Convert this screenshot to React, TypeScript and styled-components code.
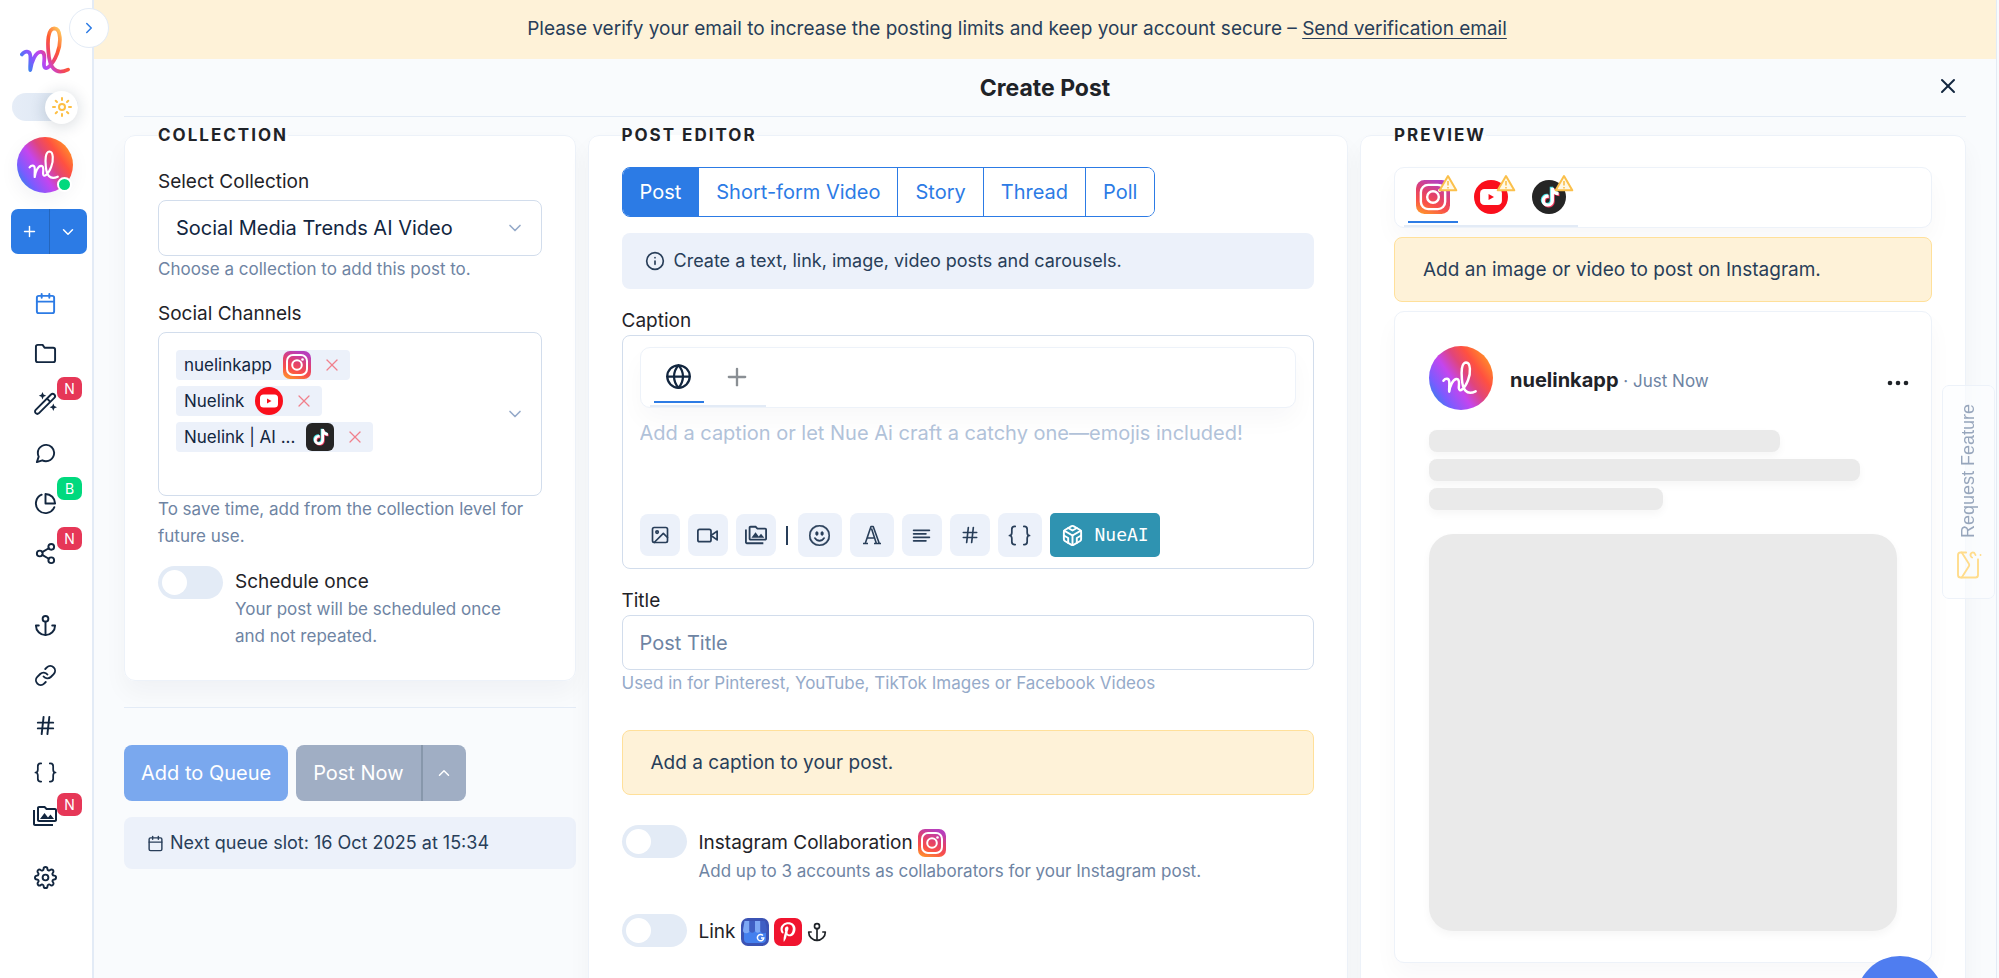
import React, { ReactNode } from "react";
import styled, { createGlobalStyle, css } from "styled-components";
import {
  FiAlignLeft,
  FiAnchor,
  FiCalendar,
  FiChevronDown,
  FiChevronRight,
  FiChevronUp,
  FiCodesandbox,
  FiFolder,
  FiGlobe,
  FiHash,
  FiImage,
  FiInfo,
  FiLink,
  FiMessageCircle,
  FiPieChart,
  FiPlus,
  FiSettings,
  FiShare2,
  FiVideo,
  FiX,
} from "react-icons/fi";
import { BsEmojiSmile } from "react-icons/bs";
import { MdOutlinePermMedia } from "react-icons/md";
import { FaPinterestP, FaTiktok } from "react-icons/fa";

const color = {
  navy: "#12263f",
  ink: "#1f2328",
  slate: "#283e59",
  muted: "#6e84a3",
  faint: "#95aac9",
  border: "#d2ddec",
  hairline: "#e3ebf6",
  soft: "#edf2f9",
  panel: "#ecf1fa",
  blue: "#2c7be5",
  page: "#f9fbfd",
  warn: "#fef2d8",
  warnBorder: "#ffe09a",
  red: "#e63757",
  green: "#00d97e",
};

const GlobalStyle = createGlobalStyle`
  *, *::before, *::after { box-sizing: border-box; }
  body {
    margin: 0;
    background: ${color.page};
    color: ${color.ink};
    font-family: Inter, "Liberation Sans", sans-serif;
    font-size: 19px;
    line-height: 26px;
  }
  button, input, select, textarea { font: inherit; color: inherit; margin: 0; }
  button { cursor: pointer; }
  h1, h2, p { margin: 0; }
  svg { display: block; flex: none; }
`;

/* ---------- shell ---------- */

const Shell = styled.div`
  display: flex;
  height: 100vh;
  padding-right: 2px;
`;

const Sidebar = styled.aside`
  position: relative;
  flex: none;
  width: 94px;
  background: #fff;
  border-right: 2px solid ${color.hairline};
`;

const SideTop = styled.div`
  display: flex;
  flex-direction: column;
  align-items: center;
  width: 90px;
  padding-top: 25px;
`;

const CollapseButton = styled.button`
  position: absolute;
  z-index: 2;
  top: 8px;
  right: -17px;
  display: grid;
  place-items: center;
  width: 40px;
  height: 40px;
  padding: 0;
  border: 1px solid ${color.hairline};
  border-radius: 50%;
  background: #fff;
  color: ${color.blue};
`;

const ThemeSwitch = styled.button`
  display: flex;
  justify-content: flex-end;
  align-items: center;
  width: 66px;
  height: 28px;
  margin-top: 17px;
  padding: 0;
  border: 0;
  border-radius: 14px;
  background: linear-gradient(90deg, #e6edf7, #dbe5f2);
`;

const ThemeKnob = styled.span`
  display: grid;
  place-items: center;
  flex: none;
  width: 33px;
  height: 33px;
  border-radius: 50%;
  background: #fff;
  box-shadow: 0 2px 16px rgba(18, 38, 63, 0.18);
`;

const AccountButton = styled.button`
  position: relative;
  margin-top: 16px;
  padding: 0;
  border: 0;
  border-radius: 50%;
  background: none;
  box-shadow: 0 6px 20px rgba(18, 38, 63, 0.06);
`;

const OnlineDot = styled.span`
  position: absolute;
  right: 1px;
  bottom: 1px;
  width: 15px;
  height: 15px;
  border: 2px solid #fff;
  border-radius: 50%;
  background: ${color.green};
`;

const CreateGroup = styled.div`
  display: flex;
  align-self: flex-end;
  width: 76px;
  height: 45px;
  margin: 16px 3px 0 0;
  border-radius: 7px;
  background: ${color.blue};
  overflow: hidden;

  button {
    display: grid;
    place-items: center;
    flex: 1;
    padding: 0;
    border: 0;
    background: none;
    color: #fff;
  }
  button + button {
    border-left: 1px solid #2466bd;
  }
`;

const NavGroup = styled.nav<{ $gap: number }>`
  display: flex;
  flex-direction: column;
  align-items: center;
  width: 90px;
  margin-top: ${(p) => p.$gap}px;
`;

const NavLink = styled.a<{ $active?: boolean; $compact?: boolean }>`
  position: relative;
  display: grid;
  place-items: center;
  width: 48px;
  height: ${(p) => (p.$compact ? 44 : 50)}px;
  color: ${(p) => (p.$active ? color.blue : color.navy)};
`;

const NavBadge = styled.span<{ $tone: "red" | "green" }>`
  position: absolute;
  top: -1px;
  left: 36px;
  width: 25px;
  height: 23px;
  border-radius: 7px;
  background: ${(p) => color[p.$tone]};
  color: #fff;
  font-size: 14px;
  line-height: 23px;
  text-align: center;
`;

/* ---------- main column ---------- */

const Main = styled.main`
  display: flex;
  flex-direction: column;
  flex: 1;
  min-width: 0;
  border-right: 1px solid ${color.hairline};
`;

const VerifyBanner = styled.div`
  flex: none;
  padding: 16px 72px 17px 16px;
  background: ${color.warn};
  color: ${color.slate};
  text-align: center;

  a {
    color: inherit;
    text-decoration: underline;
    text-underline-offset: 3px;
  }
`;

const TitleBar = styled.header`
  display: grid;
  grid-template-columns: 1fr auto 1fr;
  align-items: center;
  flex: none;
  height: 58px;
  margin: 0 30px;
  border-bottom: 1px solid ${color.hairline};

  h1 {
    grid-column: 2;
    font-size: 23px;
    font-weight: 700;
    line-height: 28px;
  }
`;

const CloseButton = styled.button`
  justify-self: end;
  display: grid;
  place-items: center;
  width: 36px;
  height: 36px;
  padding: 0 0 4px;
  border: 0;
  background: none;
  color: ${color.navy};
`;

const Columns = styled.div`
  display: grid;
  grid-template-columns: repeat(12, minmax(0, 1fr));
  grid-template-rows: minmax(min-content, 1fr);
  column-gap: 12px;
  flex: 1;
  min-height: 0;
  padding: 5px 30px 24px;
  overflow-y: auto;
  scrollbar-width: none;
`;

const Column = styled.div<{ $span: number }>`
  grid-column: span ${(p) => p.$span};
  display: flex;
  flex-direction: column;
`;

const Card = styled.fieldset<{ $fill?: boolean }>`
  min-width: 0;
  margin: 0;
  padding: 19px 33px 30px;
  border: 1px solid ${color.soft};
  border-radius: 11px;
  background: #fff;
  box-shadow: 0 12px 24px rgba(18, 38, 63, 0.04);
  ${(p) => p.$fill && css`flex: 1 0 auto;`}
`;

const Legend = styled.legend`
  padding: 0;
  color: ${color.ink};
  font-size: 17px;
  font-weight: 700;
  letter-spacing: 2px;
  line-height: 26px;
  text-transform: uppercase;
`;

/* ---------- form parts ---------- */

const Field = styled.div<{ $gap?: number }>`
  display: flex;
  flex-direction: column;
  margin-top: ${(p) => p.$gap ?? 0}px;
`;

const Label = styled.label<{ $tight?: boolean }>`
  margin-bottom: ${(p) => (p.$tight ? 1 : 5)}px;
`;

const Help = styled.p<{ $faint?: boolean }>`
  color: ${(p) => (p.$faint ? color.faint : color.muted)};
  font-size: 17px;
  line-height: 27px;
`;

const SelectBox = styled.div`
  display: grid;
  align-items: center;
  height: 56px;
  border: 1px solid ${color.border};
  border-radius: 8px;
  background: #fff;
  color: ${color.faint};

  select {
    grid-area: 1 / 1;
    width: 100%;
    height: 100%;
    padding: 0 48px 0 17px;
    border: 0;
    background: none;
    color: ${color.navy};
    font-size: 20px;
    appearance: none;
  }
  svg {
    grid-area: 1 / 1;
    justify-self: end;
    margin-right: 16px;
    pointer-events: none;
  }
`;

const ChipBox = styled.div`
  display: flex;
  align-items: center;
  height: 164px;
  padding: 17px 16px 17px 17px;
  border: 1px solid ${color.border};
  border-radius: 8px;
`;

const ChipList = styled.ul`
  display: flex;
  flex-direction: column;
  align-items: flex-start;
  align-self: flex-start;
  gap: 6px;
  flex: 1;
  margin: 0;
  padding: 0;
  list-style: none;
`;

const Chip = styled.li`
  display: flex;
  align-items: center;
  gap: 11px;
  height: 30px;
  padding: 0 8px;
  border-radius: 4px;
  background: ${color.panel};
  color: ${color.navy};
  font-size: 17px;
`;

const PlainButton = styled.button<{ $tone: string }>`
  display: grid;
  place-items: center;
  width: 20px;
  height: 20px;
  padding: 0;
  border: 0;
  background: none;
  color: ${(p) => p.$tone};
`;

const SwitchRow = styled.div<{ $gap: number }>`
  display: flex;
  gap: 12px;
  margin-top: ${(p) => p.$gap}px;
`;

const Switch = styled.input`
  flex: none;
  display: flex;
  align-items: center;
  width: 65px;
  height: 33px;
  margin: 0;
  padding: 4px;
  border-radius: 17px;
  background: #e3ebf6;
  appearance: none;
  cursor: pointer;

  &::before {
    content: "";
    width: 25px;
    height: 25px;
    border-radius: 50%;
    background: #fff;
  }
  &:checked {
    justify-content: flex-end;
    background: ${color.blue};
  }
`;

const SwitchText = styled.div`
  padding: 2px 16px 0 0;
`;

const SwitchLabel = styled.label<{ $icons?: boolean }>`
  display: flex;
  align-items: center;
  gap: 5px;
  min-height: ${(p) => (p.$icons ? 31 : 28)}px;
`;

const Divider = styled.hr`
  width: 100%;
  margin: 26px 0 37px;
  border: 0;
  border-top: 1px solid ${color.hairline};
`;

const ButtonRow = styled.div`
  display: flex;
  gap: 8px;
`;

const ActionButton = styled.button<{ $tone: "primary" | "muted" }>`
  height: 56px;
  padding: 0 17px;
  border: 0;
  border-radius: 8px;
  background: ${(p) => (p.$tone === "primary" ? "#7aa8ee" : "#a0aec4")};
  color: #fff;
  font-size: 20px;
`;

const SplitButton = styled.div`
  display: flex;

  ${ActionButton}:first-child {
    border-radius: 8px 0 0 8px;
  }
  ${ActionButton}:last-child {
    display: grid;
    place-items: center;
    width: 45px;
    padding: 0;
    border-left: 2px solid #8797ab;
    border-radius: 0 8px 8px 0;
  }
`;

const Notice = styled.div<{ $tone: "info" | "warn"; $size?: "small" }>`
  display: flex;
  align-items: center;
  gap: ${(p) => (p.$size === "small" ? 6 : 9)}px;
  height: ${(p) => (p.$tone === "warn" ? 65 : p.$size === "small" ? 52 : 56)}px;
  padding: 0 ${(p) => (p.$tone === "warn" ? 28 : 23)}px;
  border-radius: 8px;
  background: ${color.panel};
  color: ${color.slate};
  font-size: 18px;
  ${(p) =>
    p.$tone === "warn" &&
    css`
      border: 1px solid ${color.warnBorder};
      background: ${color.warn};
      font-size: 19px;
    `}
`;

const Spaced = styled.div<{ $top: number }>`
  margin-top: ${(p) => p.$top}px;
`;

/* ---------- editor ---------- */

const TypeTabs = styled.div`
  display: flex;
  align-self: flex-start;
  width: max-content;
  height: 50px;
  border: 1px solid ${color.blue};
  border-radius: 8px;
  overflow: hidden;
`;

const TypeTab = styled.button<{ $active?: boolean }>`
  padding: 0 17px;
  border: 0;
  background: ${(p) => (p.$active ? color.blue : "#fff")};
  color: ${(p) => (p.$active ? "#fff" : color.blue)};
  font-size: 20px;

  & + & {
    border-left: 1px solid ${color.blue};
  }
`;

const CaptionBox = styled.div`
  padding: 11px 17px;
  border: 1px solid ${color.border};
  border-radius: 8px;
`;

const TabCard = styled.div`
  display: flex;
  align-items: flex-end;
  height: 61px;
  padding-left: 9px;
  border: 1px solid ${color.soft};
  border-radius: 10px;
  background: #fff;
  box-shadow: 0 12px 24px rgba(18, 38, 63, 0.03);
`;

const TabStrip = styled.div`
  display: flex;
  gap: 8px;
  height: 59px;
  padding: 2px 4px 2px;
  border-bottom: 2px solid ${color.hairline};
`;

const IconTab = styled.button<{ $active?: boolean; $tone?: string }>`
  display: grid;
  place-items: center;
  width: 50px;
  padding: 2px 0 0;
  border: 0;
  border-bottom: 2px solid ${(p) => (p.$active ? color.blue : "transparent")};
  background: none;
  color: ${(p) => p.$tone ?? color.navy};
`;

const CaptionInput = styled.textarea`
  display: block;
  width: 100%;
  height: 105px;
  padding: 12px 0 0;
  border: 0;
  outline: 0;
  background: none;
  font-size: 20px;
  line-height: 27px;
  resize: none;

  &::placeholder {
    color: #b1c2d9;
    opacity: 1;
  }
`;

const Toolbar = styled.div`
  display: flex;
  align-items: center;
  gap: 8px;
`;

const ToolButton = styled.button<{ $large?: boolean }>`
  display: grid;
  place-items: center;
  width: ${(p) => (p.$large ? 44 : 40)}px;
  height: ${(p) => (p.$large ? 44 : 42)}px;
  padding: 0;
  border: 0;
  border-radius: 8px;
  background: ${color.panel};
  color: ${color.slate};
`;

const ToolDivider = styled.span`
  width: 2px;
  height: 19px;
  margin: 0 2px;
  background: ${color.slate};
`;

const AiButton = styled.button`
  display: flex;
  align-items: center;
  gap: 11px;
  height: 44px;
  padding: 0 11px;
  border: 0;
  border-radius: 5px;
  background: #2f93b1;
  color: #fff;
  font-family: "DejaVu Sans Mono", monospace;
  font-size: 18px;
`;

const TextInput = styled.input`
  height: 55px;
  padding: 0 17px;
  border: 1px solid ${color.border};
  border-radius: 8px;
  background: #fff;
  font-size: 20px;

  &::placeholder {
    color: ${color.muted};
    opacity: 1;
  }
`;

/* ---------- preview ---------- */

const ChannelIcon = styled.span`
  position: relative;
`;

const WarningMark = styled.span`
  position: absolute;
  top: -6px;
  right: -8px;
`;

const PreviewStack = styled.div`
  display: flex;
  flex-direction: column;
  gap: 9px;
`;

const PostCard = styled.article`
  padding: 34px 34px 31px;
  border: 1px solid ${color.soft};
  border-radius: 10px;
  background: #fff;
  box-shadow: 0 12px 24px rgba(18, 38, 63, 0.03);
`;

const PostHeader = styled.header`
  display: flex;
  align-items: center;
  gap: 17px;
  margin: 0 -12px 20px 0;
`;

const PostAuthor = styled.p`
  flex: 1;
  padding-top: 4px;
  color: ${color.muted};
  font-size: 17px;

  strong {
    color: ${color.ink};
    font-size: 20px;
    font-weight: 700;
  }
`;

const PostMenu = styled(PlainButton)`
  width: 22px;
  height: 36px;
  padding-top: 10px;
`;

const SkeletonLine = styled.div<{ $width: string }>`
  width: ${(p) => p.$width};
  height: 22px;
  margin-bottom: 7px;
  border-radius: 8px;
  background: #eaeaea;
  box-shadow: 0 4px 8px rgba(0, 0, 0, 0.04);
`;

const SkeletonMedia = styled.div`
  height: 397px;
  margin-top: 24px;
  border-radius: 24px;
  background: #eaeaea;
  box-shadow: 0 4px 8px rgba(0, 0, 0, 0.04);
`;

const FeatureTab = styled.button`
  position: fixed;
  top: 385px;
  right: 4px;
  display: flex;
  align-items: center;
  justify-content: center;
  gap: 12px;
  width: 53px;
  height: 214px;
  padding: 0;
  border: 1px solid ${color.soft};
  border-radius: 7px;
  background: rgba(252, 253, 255, 0.6);
  color: #97a6bc;
  font-family: "Liberation Sans", sans-serif;
  font-size: 18px;
  writing-mode: vertical-rl;
  transform: rotate(180deg);
`;

const ChatLauncher = styled.button`
  position: fixed;
  right: 55px;
  bottom: -66px;
  width: 88px;
  height: 88px;
  border: 0;
  border-radius: 50%;
  background: #4f7df0;
`;

/* ---------- drawings ---------- */

const SCRIPT_NL =
  "M21 54 C24 50 29 50 29.500 55 C30 60 29 66 29.500 70 C30.500 62 35 51 40.500 51.500 C46 52 43 61 43.500 65 C44 72 52 66 57 53 C61 43 61 27.500 54 27.500 C47 28 47 42 48 52 C49 66 54 76 68 69.500";

const BrandGradient = ({ id }: { id: string }) => (
  <linearGradient id={id} x1="0" y1="0.8" x2="1" y2="0.1">
    <stop offset="0" stopColor="#2c86e8" />
    <stop offset="0.16" stopColor="#7a5cff" />
    <stop offset="0.38" stopColor="#c445ee" />
    <stop offset="0.56" stopColor="#e0457b" />
    <stop offset="0.72" stopColor="#ff5140" />
    <stop offset="0.9" stopColor="#ff8a2a" />
    <stop offset="1" stopColor="#ffb22e" />
  </linearGradient>
);

const Logo = () => (
  <svg width="52" height="51" viewBox="18 24 53 52" fill="none" role="img" aria-label="Nuelink">
    <defs>
      <linearGradient id="logo" gradientUnits="userSpaceOnUse" x1="20" y1="62" x2="62" y2="34">
        <stop offset="0" stopColor="#2c8ce8" />
        <stop offset="0.2" stopColor="#7a5cff" />
        <stop offset="0.4" stopColor="#c045ee" />
        <stop offset="0.58" stopColor="#ee4468" />
        <stop offset="0.75" stopColor="#ff5a30" />
        <stop offset="1" stopColor="#ffc25a" />
      </linearGradient>
    </defs>
    <path d={SCRIPT_NL} stroke="url(#logo)" strokeWidth="3.800" strokeLinecap="round" strokeLinejoin="round" />
  </svg>
);

const Avatar = ({ size, id }: { size: number; id: string }) => (
  <svg width={size} height={size} viewBox="0 0 56 56" fill="none">
    <defs>
      <BrandGradient id={id} />
    </defs>
    <circle cx="28" cy="28" r="28" fill={`url(#${id})`} />
    <path
      d={SCRIPT_NL}
      transform="translate(0 -2) scale(.6)"
      stroke="#fff"
      strokeWidth="3.600"
      strokeLinecap="round"
      strokeLinejoin="round"
    />
  </svg>
);

const Sun = () => (
  <svg width="20" height="20" viewBox="0 0 20 20" fill="none" stroke="#fdbf45" strokeWidth="2" strokeLinecap="round">
    <circle cx="10" cy="10" r="3" />
    <path d="M10 1v2M10 17v2M1 10h2M17 10h2M3.700 3.700l1.300 1.300M15 15l1.300 1.300M3.700 16.300 5 15M15 5l1.300-1.300" />
  </svg>
);

const Wand = () => (
  <svg width="23" height="23" viewBox="0 0 23 23" fill="none" stroke="currentColor" strokeWidth="1.900" strokeLinejoin="round">
    <path d="M1.700 17.800 17 2.500a2.300 2.300 0 0 1 3.300 3.300L5 21.100a2.300 2.300 0 0 1-3.300-3.300zM13 6.500l3.300 3.300" />
    <path d="M8.500 0l1.100 2.600 2.600 1.100-2.600 1.100-1.100 2.600-1.100-2.600-2.600-1.100 2.600-1.100zM19.300 11.500l1.100 2.600 2.600 1.100-2.600 1.100-1.100 2.600-1.100-2.600-2.600-1.100 2.600-1.100z" fill="currentColor" strokeWidth="0" />
  </svg>
);

const WideBraces = ({ width = 23 }: { width?: number }) => (
  <svg width={width} height={width} viewBox="0 0 24 24" fill="none" stroke="currentColor" strokeWidth="1.800" strokeLinecap="round" strokeLinejoin="round">
    <path d="M7.500 2.500H7a3 3 0 0 0-3 3v3.300C4 10.500 3.200 12 1.500 12 3.200 12 4 13.500 4 15.200v3.300a3 3 0 0 0 3 3h.500M16.500 2.500h.500a3 3 0 0 1 3 3v3.300c0 1.700.800 3.200 2.500 3.200-1.700 0-2.500 1.500-2.500 3.200v3.300a3 3 0 0 1-3 3h-.500" />
  </svg>
);

const OutlinedLetter = () => (
  <svg width="20" height="20" viewBox="0 0 20 20" fill="none" stroke="currentColor" strokeWidth="1.600" strokeLinejoin="round">
    <path d="M1 18.500h5M12 18.500h7M3.300 18.200 9 1.500h2.200l6 16.800M9.500 3.500l4.800 14.700M5 13h7.500" />
  </svg>
);

const Instagram = ({ size }: { size: number }) => (
  <svg width={size} height={size} viewBox="0 0 28 28" fill="none">
    <defs>
      <linearGradient id="insta" x1="0.1" y1="1" x2="0.5" y2="0">
        <stop offset="0" stopColor="#ff9a2a" />
        <stop offset="0.35" stopColor="#f9504a" />
        <stop offset="0.65" stopColor="#e0406f" />
        <stop offset="1" stopColor="#b83fbb" />
      </linearGradient>
    </defs>
    <rect width="28" height="28" rx="7" fill="url(#insta)" />
    <rect x="4" y="4" width="20" height="20" rx="6" stroke="#fff" strokeWidth="2" />
    <circle cx="14" cy="14" r="4.800" stroke="#fff" strokeWidth="2" />
    <circle cx="19.500" cy="8.500" r="1.300" fill="#fff" />
  </svg>
);

const Youtube = ({ size }: { size: number }) => (
  <svg width={size} height={size} viewBox="0 0 28 28">
    <circle cx="14" cy="14" r="14" fill="#fa0f1c" />
    <rect x="5" y="7.500" width="18" height="13" rx="3.500" fill="#fff" />
    <path d="M12 11.500v5l4.500-2.500z" fill="#fa0f1c" />
  </svg>
);

const Tiktok = ({ size, round }: { size: number; round?: boolean }) => (
  <svg width={size} height={size} viewBox="0 0 28 28">
    <rect width="28" height="28" rx={round ? 14 : 6} fill="#252525" />
    <FaTiktok x="6.200" y="5.400" size={16} color="#3fe0e6" />
    <FaTiktok x="7.600" y="6.800" size={16} color="#f23a5e" />
    <FaTiktok x="6.900" y="6.100" size={16} color="#fff" />
  </svg>
);

const Pinterest = () => (
  <svg width="28" height="28" viewBox="0 0 28 28">
    <rect width="28" height="28" rx="7" fill="#f0142f" />
    <FaPinterestP x="4" y="4" size={20} color="#fff" />
  </svg>
);

const BusinessProfile = () => (
  <svg width="28" height="28" viewBox="0 0 28 28" fill="none">
    <rect width="28" height="28" rx="7" fill="#3b53b4" />
    <path d="M3 13h22v8a4 4 0 0 1-4 4H7a4 4 0 0 1-4-4z" fill="#4480ee" />
    <path d="M3.500 3h5v9a3 3 0 0 1-6.500 0z" fill="#7da8f5" />
    <path d="M8.500 3H14v9a2.750 2.750 0 0 1-5.500 0z" fill="#3f5fc4" />
    <path d="M14 3h5.500v9a2.750 2.750 0 0 1-5.500 0z" fill="#7da8f5" />
    <path d="M19.500 3h4.500l2 9a3 3 0 0 1-6.500 0z" fill="#3f5fc4" />
    <path d="M22 17.500a3.200 3.200 0 1 0 .800 2.500h-2.800" stroke="#fff" strokeWidth="1.500" />
  </svg>
);

const Warning = () => (
  <svg width="20" height="18" viewBox="0 0 20 18" strokeLinejoin="round">
    <path d="M10 2 18.300 16.300H1.700z" fill="#fff8e6" stroke="#fbc04b" strokeWidth="2" />
    <path d="M10 7v4.500M10 13v1.500" stroke="#fbc04b" strokeWidth="1.600" />
  </svg>
);

const Envelope = () => (
  <svg width="30" height="30" viewBox="0 0 24 24" fill="none" stroke="#ffdc8c" strokeWidth="1.500" strokeLinecap="round" strokeLinejoin="round">
    <g transform="rotate(90 12 12)">
      <path d="M22 10.500V6a2 2 0 0 0-2-2H4a2 2 0 0 0-2 2v12c0 1.100.900 2 2 2h12.500" />
      <path d="m22 7-8.970 5.700a1.940 1.940 0 0 1-2.060 0L2 7" />
      <path d="M18 15.280c.200-.400.500-.800.900-1a2.100 2.100 0 0 1 2.600.400c.300.400.500.800.500 1.300 0 1.300-2 2-2 2M20 22v.010" />
    </g>
  </svg>
);

const Dots = () => (
  <svg width="22" height="6" viewBox="0 0 22 6" fill={color.ink}>
    <circle cx="3" cy="3" r="2.300" />
    <circle cx="11" cy="3" r="2.300" />
    <circle cx="19" cy="3" r="2.300" />
  </svg>
);

/* ---------- content ---------- */

type NavEntry = {
  name: string;
  icon: ReactNode;
  active?: boolean;
  compact?: boolean;
  badge?: "N" | "B";
};

const publishNav: NavEntry[] = [
  { name: "Calendar", icon: <FiCalendar size={23} />, active: true },
  { name: "Collections", icon: <FiFolder size={23} /> },
  { name: "Automations", icon: <Wand />, badge: "N" },
  { name: "Inbox", icon: <FiMessageCircle size={23} /> },
  { name: "Analytics", icon: <FiPieChart size={23} />, badge: "B" },
  { name: "Share", icon: <FiShare2 size={23} />, badge: "N" },
];

const toolsNav: NavEntry[] = [
  { name: "Bio links", icon: <FiAnchor size={23} /> },
  { name: "Short links", icon: <FiLink size={23} /> },
  { name: "Hashtags", icon: <FiHash size={23} /> },
  { name: "Variables", icon: <WideBraces />, compact: true },
  { name: "Media library", icon: <MdOutlinePermMedia size={24} />, compact: true, badge: "N" },
];

const settingsNav: NavEntry[] = [{ name: "Settings", icon: <FiSettings size={23} /> }];

const Nav = ({ entries, gap, label }: { entries: NavEntry[]; gap: number; label: string }) => (
  <NavGroup $gap={gap} aria-label={label}>
    {entries.map((e) => (
      <NavLink key={e.name} href="#" aria-label={e.name} $active={e.active} $compact={e.compact}>
        {e.icon}
        {e.badge && <NavBadge $tone={e.badge === "N" ? "red" : "green"}>{e.badge}</NavBadge>}
      </NavLink>
    ))}
  </NavGroup>
);

const channels = [
  { name: "nuelinkapp", icon: <Instagram size={28} /> },
  { name: "Nuelink", icon: <Youtube size={28} /> },
  { name: "Nuelink | AI ...", icon: <Tiktok size={28} /> },
];

const previewTabs = [
  { name: "Instagram", icon: <Instagram size={34} /> },
  { name: "YouTube", icon: <Youtube size={34} /> },
  { name: "TikTok", icon: <Tiktok size={34} round /> },
];

const CollectionPanel = () => (
  <Column $span={3}>
    <Card>
      <Legend>Collection</Legend>
      <Field $gap={2}>
        <Label htmlFor="collection">Select Collection</Label>
        <SelectBox>
          <select id="collection">
            <option>Social Media Trends AI Video</option>
          </select>
          <FiChevronDown size={20} />
        </SelectBox>
        <Help>Choose a collection to add this post to.</Help>
      </Field>
      <Field $gap={18}>
        <Label as="span" id="channels-label">Social Channels</Label>
        <ChipBox role="group" aria-labelledby="channels-label">
          <ChipList>
            {channels.map((c) => (
              <Chip key={c.name}>
                {c.name}
                {c.icon}
                <PlainButton type="button" $tone="#f0808c" aria-label={`Remove ${c.name}`}>
                  <FiX size={20} strokeWidth={1.5} />
                </PlainButton>
              </Chip>
            ))}
          </ChipList>
          <PlainButton type="button" $tone={color.faint} aria-label="Show channels">
            <FiChevronDown size={20} />
          </PlainButton>
        </ChipBox>
        <Help>To save time, add from the collection level for future use.</Help>
      </Field>
      <SwitchRow $gap={16}>
        <Switch type="checkbox" id="once" />
        <SwitchText>
          <SwitchLabel htmlFor="once">Schedule once</SwitchLabel>
          <Help>Your post will be scheduled once and not repeated.</Help>
        </SwitchText>
      </SwitchRow>
    </Card>
    <Divider />
    <ButtonRow>
      <ActionButton type="button" $tone="primary">Add to Queue</ActionButton>
      <SplitButton>
        <ActionButton type="button" $tone="muted">Post Now</ActionButton>
        <ActionButton type="button" $tone="muted" aria-label="More posting options">
          <FiChevronUp size={18} />
        </ActionButton>
      </SplitButton>
    </ButtonRow>
    <Spaced $top={16}>
      <Notice $tone="info" $size="small">
        <FiCalendar size={17} />
        Next queue slot: 16 Oct 2025 at 15:34
      </Notice>
    </Spaced>
  </Column>
);

const EditorPanel = () => (
  <Column $span={5}>
    <Card $fill>
      <Legend>Post Editor</Legend>
      <TypeTabs>
        {["Post", "Short-form Video", "Story", "Thread", "Poll"].map((t, i) => (
          <TypeTab key={t} type="button" $active={i === 0}>{t}</TypeTab>
        ))}
      </TypeTabs>
      <Spaced $top={16}>
        <Notice $tone="info">
          <FiInfo size={20} />
          Create a text, link, image, video posts and carousels.
        </Notice>
      </Spaced>
      <Field $gap={19}>
        <Label $tight htmlFor="caption">Caption</Label>
        <CaptionBox>
          <TabCard>
            <TabStrip>
              <IconTab type="button" $active aria-label="All channels"><FiGlobe size={27} /></IconTab>
              <IconTab type="button" $tone="#8a8f94" aria-label="Add caption variant"><FiPlus size={28} /></IconTab>
            </TabStrip>
          </TabCard>
          <CaptionInput id="caption" placeholder="Add a caption or let Nue Ai craft a catchy one—emojis included!" />
          <Toolbar>
            <ToolButton type="button" aria-label="Add image"><FiImage size={20} /></ToolButton>
            <ToolButton type="button" aria-label="Add video"><FiVideo size={21} /></ToolButton>
            <ToolButton type="button" aria-label="Media library"><MdOutlinePermMedia size={22} /></ToolButton>
            <ToolDivider />
            <ToolButton type="button" $large aria-label="Emoji"><BsEmojiSmile size={21} strokeWidth={0.4} /></ToolButton>
            <ToolButton type="button" $large aria-label="Font style"><OutlinedLetter /></ToolButton>
            <ToolButton type="button" aria-label="Text spacing"><FiAlignLeft size={21} /></ToolButton>
            <ToolButton type="button" aria-label="Hashtags"><FiHash size={20} /></ToolButton>
            <ToolButton type="button" $large aria-label="Variables"><WideBraces /></ToolButton>
            <AiButton type="button"><FiCodesandbox size={23} />NueAI</AiButton>
          </Toolbar>
        </CaptionBox>
      </Field>
      <Field $gap={19}>
        <Label $tight htmlFor="title">Title</Label>
        <TextInput id="title" type="text" placeholder="Post Title" />
        <Help $faint>Used in for Pinterest, YouTube, TikTok Images or Facebook Videos</Help>
      </Field>
      <Spaced $top={33}>
        <Notice $tone="warn">Add a caption to your post.</Notice>
      </Spaced>
      <SwitchRow $gap={30}>
        <Switch type="checkbox" id="collab" />
        <SwitchText>
          <SwitchLabel htmlFor="collab" $icons>
            Instagram Collaboration <Instagram size={28} />
          </SwitchLabel>
          <Help>Add up to 3 accounts as collaborators for your Instagram post.</Help>
        </SwitchText>
      </SwitchRow>
      <SwitchRow $gap={29}>
        <Switch type="checkbox" id="link" />
        <SwitchText>
          <SwitchLabel htmlFor="link" $icons>
            Link <BusinessProfile /> <Pinterest /> <FiAnchor size={20} />
          </SwitchLabel>
        </SwitchText>
      </SwitchRow>
    </Card>
  </Column>
);

const PreviewPanel = () => (
  <Column $span={4}>
    <Card $fill>
      <Legend>Preview</Legend>
      <PreviewStack>
        <TabCard>
          <TabStrip>
            {previewTabs.map((t, i) => (
              <IconTab key={t.name} type="button" $active={i === 0} aria-label={t.name}>
                <ChannelIcon>
                  {t.icon}
                  <WarningMark><Warning /></WarningMark>
                </ChannelIcon>
              </IconTab>
            ))}
          </TabStrip>
        </TabCard>
        <Notice $tone="warn">Add an image or video to post on Instagram.</Notice>
        <PostCard>
          <PostHeader>
            <Avatar size={64} id="avatar-post" />
            <PostAuthor><strong>nuelinkapp</strong> · Just Now</PostAuthor>
            <PostMenu type="button" $tone={color.ink} aria-label="Post options"><Dots /></PostMenu>
          </PostHeader>
          <SkeletonLine $width="75%" />
          <SkeletonLine $width="92%" />
          <SkeletonLine $width="50%" />
          <SkeletonMedia />
        </PostCard>
      </PreviewStack>
    </Card>
  </Column>
);

export default function App() {
  return (
    <>
      <GlobalStyle />
      <Shell>
        <Sidebar>
          <CollapseButton type="button" aria-label="Expand menu"><FiChevronRight size={18} /></CollapseButton>
          <SideTop>
            <Logo />
            <ThemeSwitch type="button" aria-label="Toggle theme"><ThemeKnob><Sun /></ThemeKnob></ThemeSwitch>
            <AccountButton type="button" aria-label="Account">
              <Avatar size={56} id="avatar-side" />
              <OnlineDot />
            </AccountButton>
            <CreateGroup>
              <button type="button" aria-label="Create post"><FiPlus size={17} /></button>
              <button type="button" aria-label="More create options"><FiChevronDown size={18} /></button>
            </CreateGroup>
          </SideTop>
          <Nav label="Publishing" entries={publishNav} gap={24} />
          <Nav label="Tools" entries={toolsNav} gap={22} />
          <Nav label="Settings" entries={settingsNav} gap={14} />
        </Sidebar>
        <Main>
          <VerifyBanner>
            Please verify your email to increase the posting limits and keep your account secure –{" "}
            <a href="#">Send verification email</a>
          </VerifyBanner>
          <TitleBar>
            <h1>Create Post</h1>
            <CloseButton type="button" aria-label="Close"><FiX size={24} /></CloseButton>
          </TitleBar>
          <Columns>
            <CollectionPanel />
            <EditorPanel />
            <PreviewPanel />
          </Columns>
        </Main>
      </Shell>
      <FeatureTab type="button"><Envelope />Request Feature</FeatureTab>
      <ChatLauncher type="button" aria-label="Open chat" />
    </>
  );
}
